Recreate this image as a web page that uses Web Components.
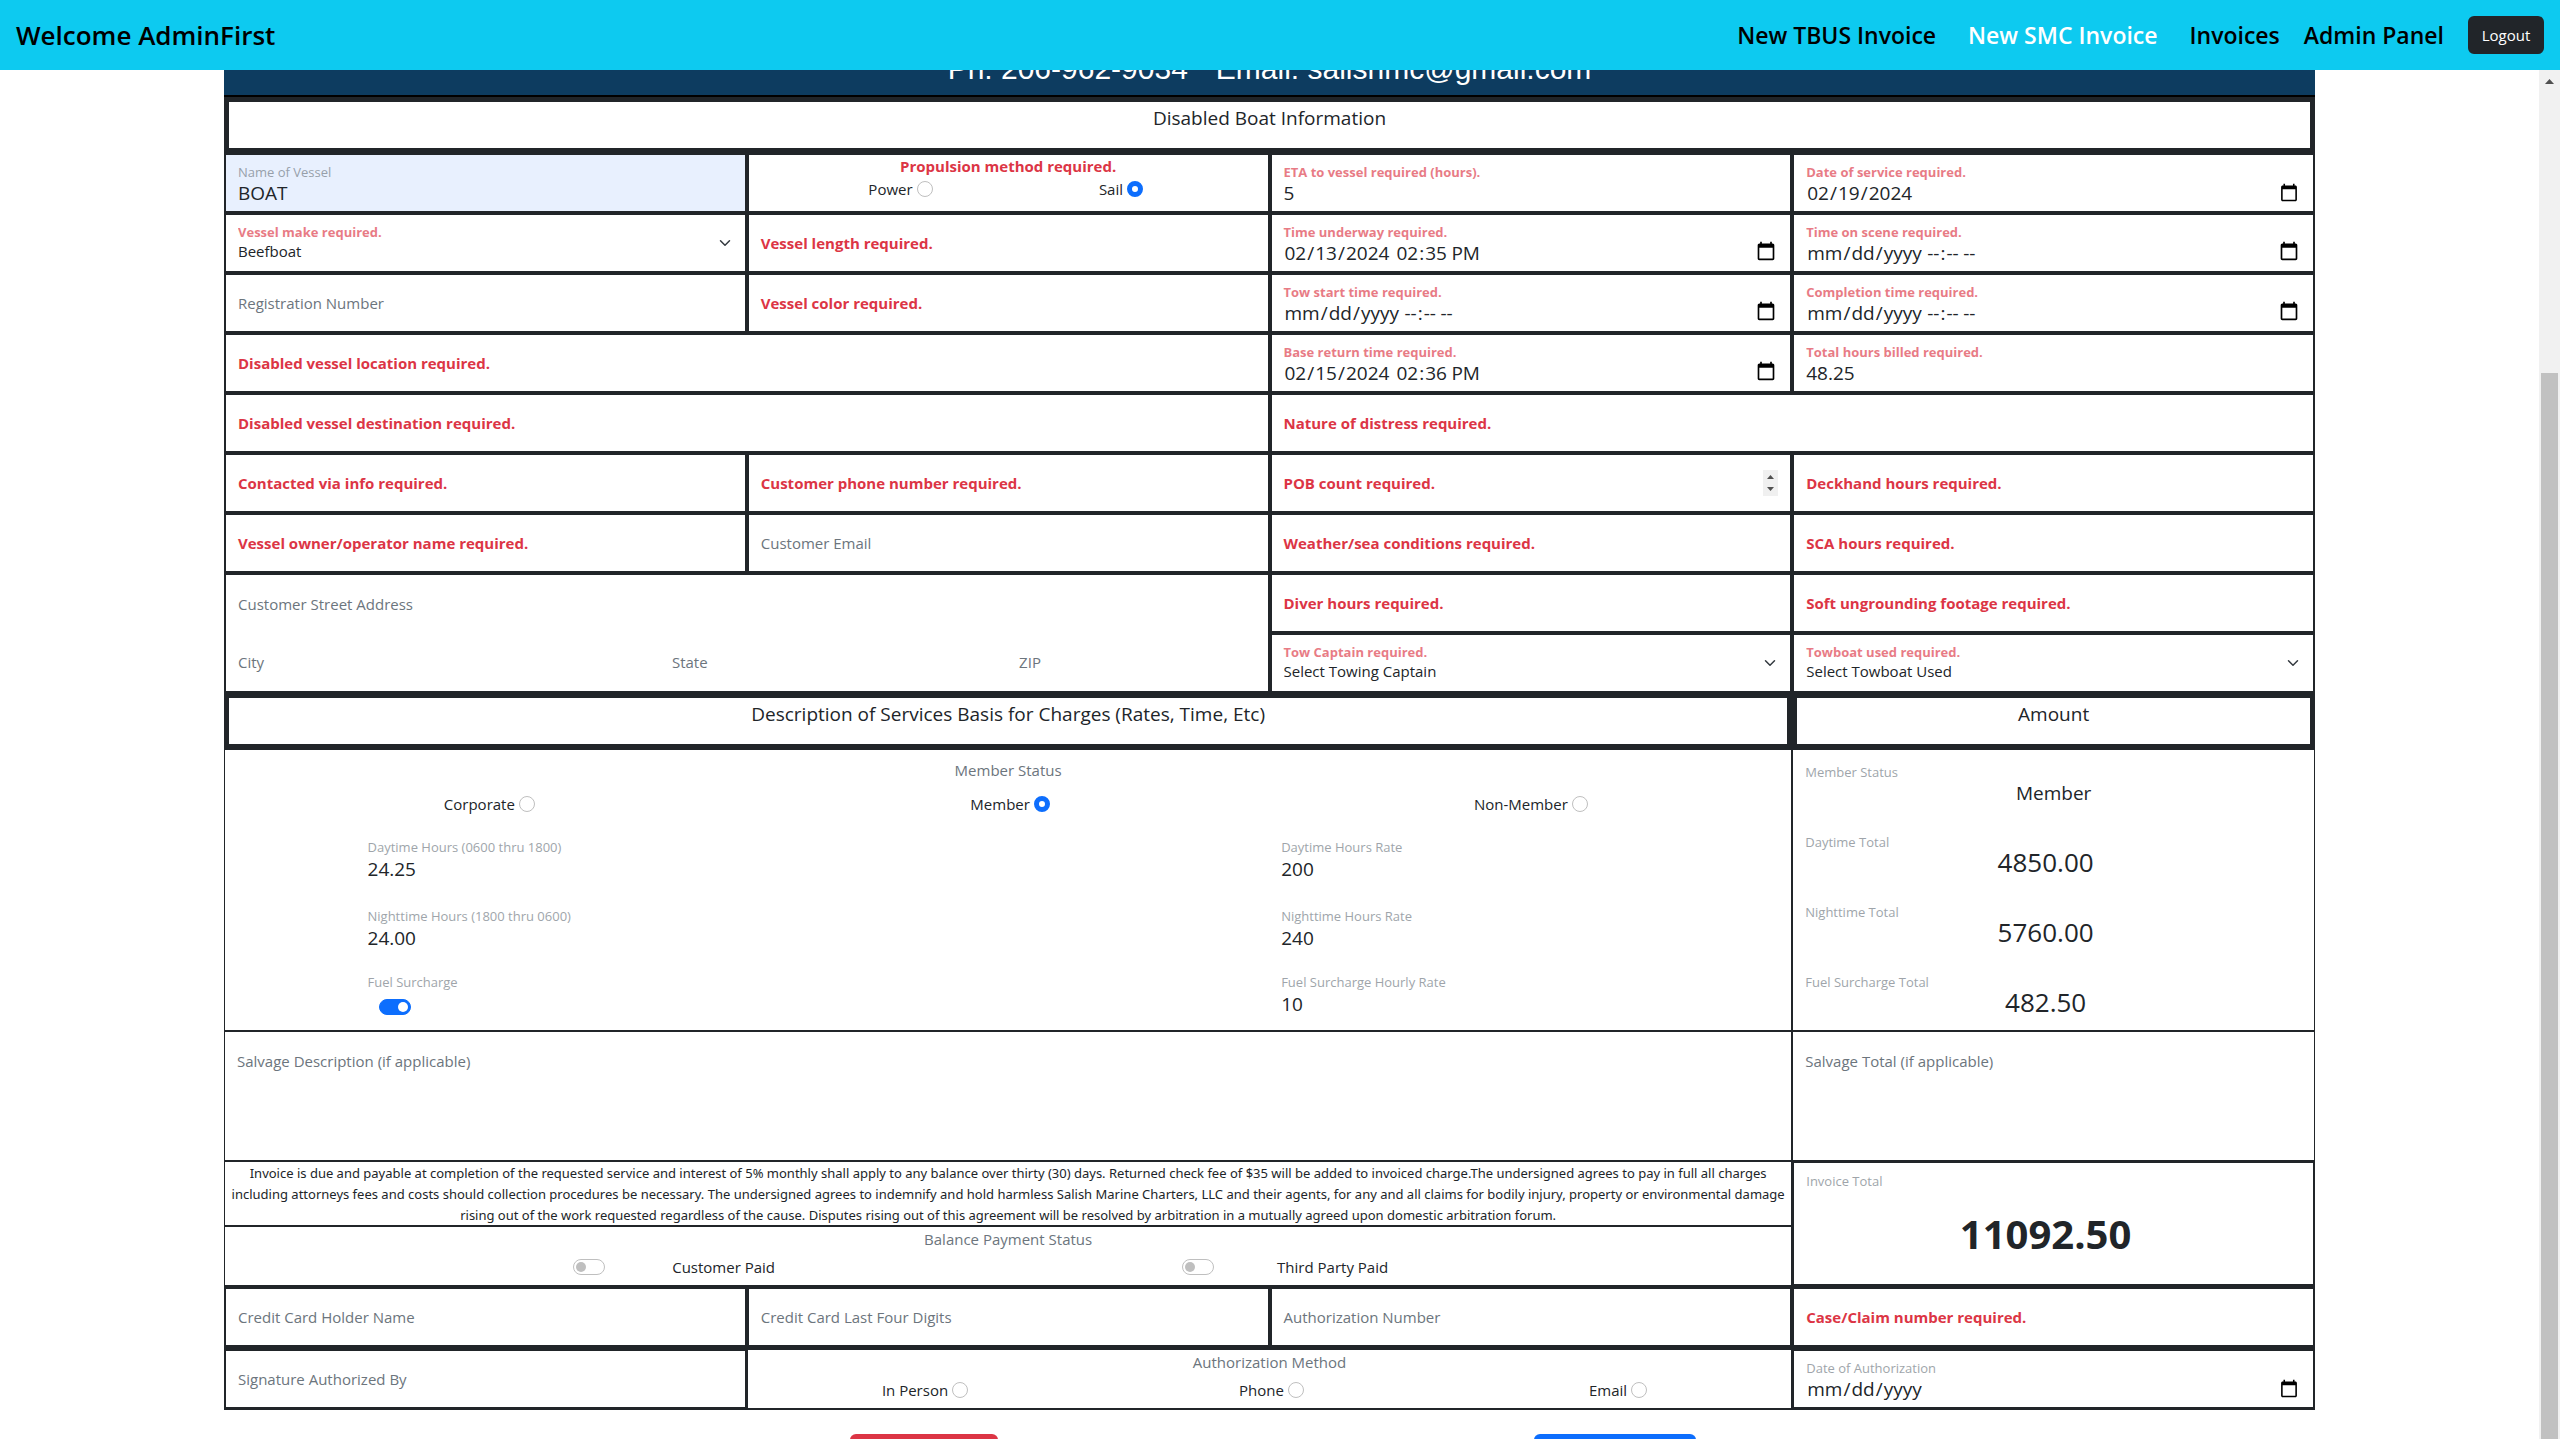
<!DOCTYPE html>
<html lang="en">
<head>
<meta charset="utf-8">
<title>New SMC Invoice</title>
<style>
  html, body { height: 100%; margin: 0; }
  body {
    --ink: #212529; --red: #dc3545; --grey: #6c757d; --blue: #0d6efd;
    --small: 13px; --text: 15px; --value: 19px;
    font-family: "Open Sans", "Noto Sans", sans-serif;
    font-size: 15px; line-height: 24px; color: var(--ink); background: #fff;
    display: flex; flex-direction: column; overflow: hidden;
  }
  .view { flex: 1; min-height: 0; display: flex; }
  invoice-form { flex: 1; min-width: 0; }
</style>
</head>
<body>
<app-nav user="AdminFirst">
  <nav-link href="#tbus">New TBUS Invoice</nav-link>
  <nav-link href="#smc" active>New SMC Invoice</nav-link>
  <nav-link href="#invoices">Invoices</nav-link>
  <nav-link href="#admin">Admin Panel</nav-link>
</app-nav>
<div class="view">
  <invoice-form></invoice-form>
  <page-scroller></page-scroller>
</div>

<script>
const base = `*, *::before, *::after { box-sizing: border-box; }
  input, select, button, textarea { font: inherit; color: inherit; margin: 0; }`;

class Base extends HTMLElement {
  constructor() { super(); this.attachShadow({ mode: "open" }); }
  connectedCallback() { this.shadowRoot.innerHTML = `<style>${base}${this.css()}</style>${this.html()}`; }
  attr(name, fallback = "") { return this.getAttribute(name) ?? fallback; }
  css() { return ""; }
  html() { return ""; }
}

customElements.define("nav-link", class extends Base {
  css() { return `
    :host { display: block; }
    a { color: #000; text-decoration: none; font-size: 23px; line-height: 32px; font-weight: 600; white-space: nowrap; }
    :host([active]) a { color: #fff; }`; }
  html() { return `<a href="${this.attr("href")}"${this.hasAttribute("active") ? ' aria-current="page"' : ""}><slot></slot></a>`; }
});

customElements.define("app-nav", class extends Base {
  css() { return `
    :host { display: block; position: relative; z-index: 1; background: #0dcaf0; }
    header { display: flex; align-items: center; height: 70px; padding: 0 16px; }
    h1 { margin: 0; font-size: 26px; line-height: 36px; font-weight: 600; color: #000; flex: 1; }
    nav { display: flex; align-items: center; gap: 24px; }
    ::slotted(nav-link:nth-of-type(2)) { margin: 0 8px; }
    button { height: 38px; width: 76px; padding: 0; border: 0; border-radius: 6px; background: #212529; color: #fff; }`; }
  html() { return `<header><h1>Welcome ${this.attr("user")}</h1><nav><slot></slot><button type="button">Logout</button></nav></header>`; }
});

customElements.define("page-scroller", class extends Base {
  css() { return `
    :host { box-sizing: border-box; display: flex; flex-direction: column; width: 21px; background: #f1f1f1; padding: 0 2px; }
    svg { display: block; margin: 0 auto; width: 17px; height: 20px; flex: none; }
    .gap { flex: 0 0 283px; }
    .thumb { flex: 1; background: #c1c1c1; }`; }
  html() { return `<svg viewBox="0 0 17 20" aria-hidden="true"><path d="M4 14h9L8.500 9z" fill="#505050"/></svg><div class="gap"></div><div class="thumb"></div>`; }
});

customElements.define("section-heading", class extends Base {
  css() { return `
    :host { display: block; height: 56px; border: 5px solid var(--ink); text-align: center; }
    h2 { margin: 0; font-size: var(--value); line-height: 32px; font-weight: 400; }`; }
  html() { return `<h2><slot></slot></h2>`; }
});

customElements.define("float-field", class extends Base {
  css() { return `
    :host { display: grid; grid-template: minmax(0, 1fr) / minmax(0, 1fr); height: 60px; border: 2px solid var(--ink); }
    :host([bare]) { border: 0; }
    :host([filled]) { background: #e8f0fe; }
    label, input, textarea, select, svg, .moment { grid-area: 1 / 1; }
    label { align-self: center; padding-left: 12px; font-size: var(--text); line-height: 24px; color: var(--grey); pointer-events: none; z-index: 1; }
    :host([required]) label { color: var(--red); font-weight: 700; }
    :host([up]) label, :host([top]) label { align-self: start; }
    :host([top]) label { padding-top: 17px; }
    :host([up]) label { padding-top: 7px; font-size: var(--small); line-height: 20px; opacity: .65; }
    input, textarea, select { width: 100%; height: 100%; border: 0; outline: 0; border-radius: 0; background: transparent; padding: 24px 12px 4px; font-size: var(--value); line-height: 30px; resize: none; appearance: none; }
    input::-webkit-inner-spin-button { display: none; }
    input::-webkit-datetime-edit, input::-webkit-datetime-edit-fields-wrapper { padding: 0; }
    input::-webkit-calendar-picker-indicator { width: 20px; height: 20px; padding: 0; margin-right: 2px; }
    .moment { display: flex; gap: 4px; padding-left: 12px; }
    .moment input { width: auto; padding-left: 0; padding-right: 0; }
    .moment input[type=date] { flex: none; width: 108px; }
    .moment input[type=date][value=""] { width: 116px; }
    .moment input::-webkit-calendar-picker-indicator { display: none; }
    select { font-size: var(--text); line-height: 24px; padding: 24px 36px 8px 12px; }
    svg { justify-self: end; align-self: center; margin-right: 12px; pointer-events: none; }
    .chevron { width: 16px; height: 12px; }
    .steps { width: 15px; height: 26px; }
    .calendar { align-self: start; width: 20px; height: 20px; margin: 26px 14px 0 0; }`; }
  html() {
    const type = this.attr("type", "text"), value = this.attr("value");
    const label = `<label for="f">${this.attr("label")}</label>`;
    if (type === "select") return `${label}<select id="f"><option>${value}</option></select>
      <svg class="chevron" viewBox="0 0 16 16" fill="none" stroke="#343a40" stroke-width="2" stroke-linecap="round" stroke-linejoin="round" aria-hidden="true"><path d="m2 5 6 6 6-6"/></svg>`;
    if (type === "area") return `${label}<textarea id="f"></textarea>`;
    if (type === "moment") {
      const [day = "", time = ""] = value.split("T");
      return `${label}<div class="moment"><input id="f" type="date" value="${day}"><input type="time" aria-label="Time" value="${time}"></div>
      <svg class="calendar" viewBox="0 0 24 24" aria-hidden="true"><path d="M20 3h-1V1h-2v2H7V1H5v2H4c-1.100 0-2 .9-2 2v16c0 1.100.9 2 2 2h16c1.100 0 2-.9 2-2V5c0-1.100-.9-2-2-2zm0 18H4V8h16v13z"/></svg>`;
    }
    const steps = type === "number" ? `<svg class="steps" viewBox="0 0 15 26" aria-hidden="true"><path fill="#f0f0f0" d="M0 0h15v26H0z"/><path fill="#505050" d="M4 9h7L7.500 5zM4 17h7l-3.500 4z"/></svg>` : "";
    return `${label}<input id="f" type="${type}" value="${value}">${steps}`;
  }
});

customElements.define("radio-group", class extends Base {
  css() { return `
    :host { display: block; }
    fieldset { border: 0; margin: 0; padding: 0; min-width: 0; }
    legend { width: 100%; padding: 0; text-align: center; color: var(--grey); line-height: 24px; }
    :host([required]) legend { color: var(--red); font-weight: 700; line-height: 22px; }
    .options { display: grid; grid-auto-flow: column; grid-auto-columns: 1fr; padding-top: var(--option-gap, 0px); padding-left: 4px; }
    :host([narrow]) .options { padding-left: 8%; padding-right: 7%; }
    span { display: flex; justify-content: center; align-items: center; gap: 4px; height: 24px; }
    input { appearance: none; width: 16px; height: 16px; border: 1px solid #bfbfbf; border-radius: 50%; background: #fff; }
    input:checked { border: 5px solid var(--blue); }`; }
  html() {
    const chosen = this.attr("chosen");
    return `<fieldset><legend>${this.attr("label")}</legend><div class="options">${this.attr("options").split("|").map((o, i) =>
      `<span><label for="r${i}">${o}</label><input id="r${i}" type="radio" name="choice"${o === chosen ? " checked" : ""}></span>`).join("")}</div></fieldset>`;
  }
});

customElements.define("toggle-switch", class extends Base {
  css() { return `
    :host { display: flex; align-items: center; }
    input { appearance: none; flex: none; width: 32px; height: 16px; border: 1px solid #bfbfbf; border-radius: 8px; background: #fff; padding: 2px; display: flex; }
    input::before { content: ""; width: 10px; height: 10px; border-radius: 50%; background: #bfbfbf; }
    input:checked { background: var(--blue); border-color: var(--blue); justify-content: flex-end; }
    input:checked::before { background: #fff; }
    label { flex: 1; text-align: center; padding-left: 8px; }
    :host([stacked]) { flex-direction: column; align-items: flex-start; padding-left: 12px; }
    :host([stacked]) label { flex: none; order: -1; padding: 0; font-size: var(--small); line-height: 20px; color: var(--grey); opacity: .65; }
    :host([stacked]) input { margin: 7px 0 0 11px; }`; }
  html() { return `<input id="t" type="checkbox" role="switch"${this.hasAttribute("on") ? " checked" : ""}><label for="t">${this.attr("label")}</label>`; }
});

customElements.define("amount-line", class extends Base {
  css() { return `
    :host { display: block; height: 70px; padding: 0 12px; }
    label { display: block; font-size: var(--small); line-height: 20px; color: var(--grey); opacity: .65; }
    output { display: block; text-align: center; font-size: 26px; line-height: 20px; padding-right: 16px; }
    :host([word]) output { font-size: var(--value); line-height: 22px; padding-right: 0; }
    :host([total]) output { font-size: 40px; line-height: 56px; font-weight: 700; padding-top: 15px; }`; }
  html() { return `<label for="o">${this.attr("label")}</label><output id="o">${this.attr("value")}</output>`; }
});

customElements.define("invoice-form", class extends Base {
  css() { return `
    :host { display: block; }
    form { padding: 0 224px; margin-top: -20px; }
    .banner { display: flex; justify-content: center; align-items: flex-end; gap: 28px; height: 47px; padding-bottom: 9px; background: #0d3c60; border-bottom: 2px solid #000; color: #fff; font: 30px/34px "Liberation Sans", Arial, sans-serif; }
    .grid { display: grid; grid-template-columns: repeat(4, minmax(0, 1fr)); }
    .s2 { grid-column: span 2; } .s3 { grid-column: span 3; }
    .box { border: 2px solid var(--ink); }
    .thin { border: 1px solid var(--ink); }
    .address { grid-row: span 2; display: grid; grid-template-columns: 5fr 4fr 3fr; align-content: space-evenly; }
    .address float-field { height: 56px; }
    .address float-field:first-child { grid-column: span 3; }
    .services { height: 282px; padding-top: 8px; --option-gap: 10px; }
    .rates { display: grid; grid-template-columns: 1fr 6fr 1fr 4fr; padding-top: 14px; grid-auto-rows: 69px; }
    .rates > :nth-child(odd) { grid-column: 2; } .rates > :nth-child(even) { grid-column: 4; }
    .rates float-field { height: 58px; }
    .rates > :nth-last-child(-n+2) { margin-top: -3px; }
    .rates toggle-switch { padding-top: 7px; }
    .amounts { height: 282px; padding-top: 12px; }
    .salvage { height: 130px; border-width: 1px; }
    .terms { margin: 0; border: 1px solid var(--ink); height: 65px; padding-top: 1px; font-family: "Noto Sans", sans-serif; font-size: 13px; line-height: 21px; text-align: center; white-space: nowrap; display: flex; flex-direction: column; align-items: center; }
    .balance { height: 61px; border: 1px solid var(--ink); border-bottom-width: 2px; text-align: center; }
    .balance p { margin: 0; color: var(--grey); line-height: 24px; }
    .switches { display: flex; justify-content: center; gap: 347px; padding-top: 4px; }
    .switches toggle-switch { width: 262px; }
    .due { grid-row: span 2; border: 2px solid var(--ink); border-bottom-width: 3px; padding-top: 8px; }
    .last { height: 63px; border-width: 4px 2px 3px; }
    .method { height: 63px; border: 1px solid var(--ink); border-width: 3px 1px 2px; --option-gap: 4px; }
    .actions { display: grid; grid-template-columns: 1fr 1fr; justify-items: center; padding: 24px 17% 0; }
    .actions button { height: 38px; border: 0; border-radius: 6px; }
    .cancel { width: 148px; background: var(--red); }
    .submit { width: 162px; background: var(--blue); }`; }
  html() { return `
  <form>
    <div class="banner"><span>Ph: 206-962-9034</span><span>Email: salishmc@gmail.com</span></div>
    <section-heading>Disabled Boat Information</section-heading>
    <div class="grid">
      <float-field label="Name of Vessel" value="BOAT" up filled></float-field>
      <div class="box"><radio-group label="Propulsion method required." options="Power|Sail" chosen="Sail" required narrow></radio-group></div>
      <float-field label="ETA to vessel required (hours)." value="5" required up></float-field>
      <float-field label="Date of service required." type="date" value="2024-02-19" required up></float-field>

      <float-field label="Vessel make required." type="select" value="Beefboat" required up></float-field>
      <float-field label="Vessel length required." required></float-field>
      <float-field label="Time underway required." type="moment" value="2024-02-13T14:35" required up></float-field>
      <float-field label="Time on scene required." type="moment" required up></float-field>

      <float-field label="Registration Number"></float-field>
      <float-field label="Vessel color required." required></float-field>
      <float-field label="Tow start time required." type="moment" required up></float-field>
      <float-field label="Completion time required." type="moment" required up></float-field>

      <float-field class="s2" label="Disabled vessel location required." required></float-field>
      <float-field label="Base return time required." type="moment" value="2024-02-15T14:36" required up></float-field>
      <float-field label="Total hours billed required." value="48.25" required up></float-field>

      <float-field class="s2" label="Disabled vessel destination required." required></float-field>
      <float-field class="s2" label="Nature of distress required." required></float-field>

      <float-field label="Contacted via info required." required></float-field>
      <float-field label="Customer phone number required." required></float-field>
      <float-field label="POB count required." type="number" required></float-field>
      <float-field label="Deckhand hours required." required></float-field>

      <float-field label="Vessel owner/operator name required." required></float-field>
      <float-field label="Customer Email"></float-field>
      <float-field label="Weather/sea conditions required." required></float-field>
      <float-field label="SCA hours required." required></float-field>

      <div class="box s2 address">
        <float-field label="Customer Street Address" bare></float-field>
        <float-field label="City" bare></float-field>
        <float-field label="State" bare></float-field>
        <float-field label="ZIP" bare></float-field>
      </div>
      <float-field label="Diver hours required." required></float-field>
      <float-field label="Soft ungrounding footage required." required></float-field>
      <float-field label="Tow Captain required." type="select" value="Select Towing Captain" required up></float-field>
      <float-field label="Towboat used required." type="select" value="Select Towboat Used" required up></float-field>

      <section-heading class="s3">Description of Services Basis for Charges (Rates, Time, Etc)</section-heading>
      <section-heading>Amount</section-heading>

      <div class="thin s3 services">
        <radio-group label="Member Status" options="Corporate|Member|Non-Member" chosen="Member"></radio-group>
        <div class="rates">
          <float-field label="Daytime Hours (0600 thru 1800)" value="24.25" up bare></float-field>
          <float-field label="Daytime Hours Rate" value="200" up bare></float-field>
          <float-field label="Nighttime Hours (1800 thru 0600)" value="24.00" up bare></float-field>
          <float-field label="Nighttime Hours Rate" value="240" up bare></float-field>
          <toggle-switch label="Fuel Surcharge" stacked on></toggle-switch>
          <float-field label="Fuel Surcharge Hourly Rate" value="10" up bare></float-field>
        </div>
      </div>
      <div class="thin amounts">
        <amount-line label="Member Status" value="Member" word></amount-line>
        <amount-line label="Daytime Total" value="4850.00"></amount-line>
        <amount-line label="Nighttime Total" value="5760.00"></amount-line>
        <amount-line label="Fuel Surcharge Total" value="482.50"></amount-line>
      </div>

      <float-field class="s3 salvage" label="Salvage Description (if applicable)" type="area" top></float-field>
      <float-field class="salvage" label="Salvage Total (if applicable)" top></float-field>

      <p class="s3 terms"><span>Invoice is due and payable at completion of the requested service and interest of 5% monthly shall apply to any balance over thirty (30) days. Returned check fee of $35 will be added to invoiced charge.The undersigned agrees to pay in full all charges</span><span>including attorneys fees and costs should collection procedures be necessary. The undersigned agrees to indemnify and hold harmless Salish Marine Charters, LLC and their agents, for any and all claims for bodily injury, property or environmental damage</span><span>rising out of the work requested regardless of the cause. Disputes rising out of this agreement will be resolved by arbitration in a mutually agreed upon domestic arbitration forum.</span></p>
      <div class="due"><amount-line label="Invoice Total" value="11092.50" total></amount-line></div>
      <div class="s3 balance">
        <p>Balance Payment Status</p>
        <div class="switches"><toggle-switch label="Customer Paid"></toggle-switch><toggle-switch label="Third Party Paid"></toggle-switch></div>
      </div>

      <float-field label="Credit Card Holder Name"></float-field>
      <float-field label="Credit Card Last Four Digits"></float-field>
      <float-field label="Authorization Number"></float-field>
      <float-field label="Case/Claim number required." required></float-field>

      <float-field class="last" label="Signature Authorized By"></float-field>
      <div class="s2 method"><radio-group label="Authorization Method" options="In Person|Phone|Email"></radio-group></div>
      <float-field class="last" label="Date of Authorization" type="date" up></float-field>
    </div>
    <div class="actions">
      <button class="cancel" type="button" aria-label="Cancel"></button>
      <button class="submit" type="button" aria-label="Submit"></button>
    </div>
  </form>`; }
});
</script>
</body>
</html>
